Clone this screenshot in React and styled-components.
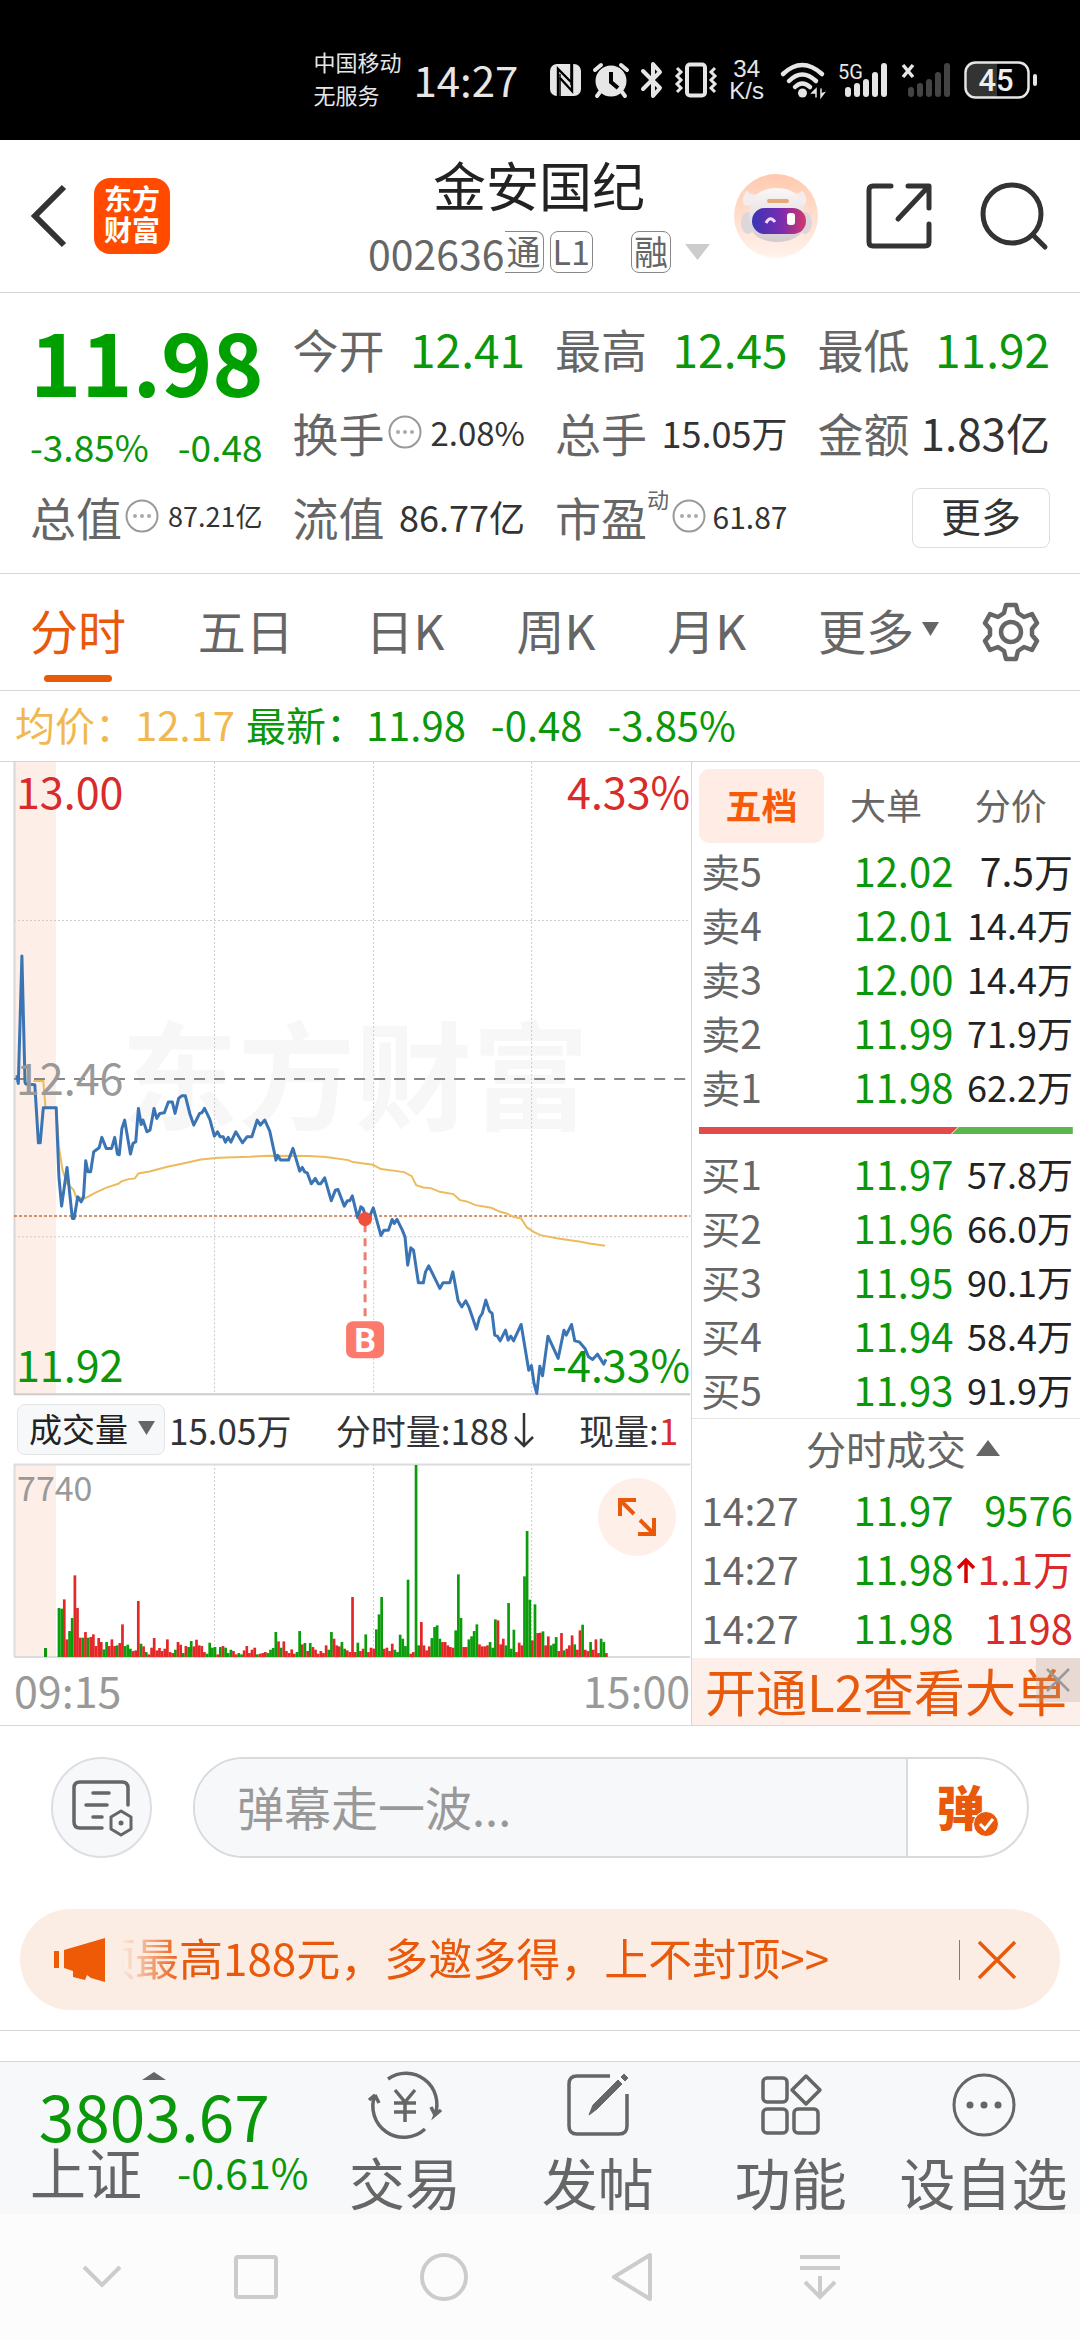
import styled, { createGlobalStyle } from 'styled-components'

const GlobalStyle = createGlobalStyle`
  * {
    box-sizing: border-box;
  }
  body {
    margin: 0;
    background: #fff;
    color: #333;
    font-family: "Noto Sans CJK SC", "Noto Sans", sans-serif;
  }
  button, input {
    margin: 0;
    padding: 0;
    border: 0;
    background: none;
    color: inherit;
    font: inherit;
  }
  a {
    color: inherit;
    text-decoration: none;
  }
  svg {
    display: block;
    flex: none;
    overflow: visible;
  }
`

const green = '#0a970a'
const red = '#d92b2b'
const orange = '#e8590c'
const grey = '#666'
const line = '#d6d6d6'

const Page = styled.div`
  min-height: 100vh;
  display: flex;
  flex-direction: column;
`

/* ---------- status bar ---------- */

const StatusBar = styled.div`
  height: 140px;
  padding: 20px 43px 0 0;
  background: #000;
  color: #e6e6e6;
  display: flex;
  align-items: center;
  justify-content: flex-end;
  gap: 12px;
`
const Carrier = styled.div`
  margin-bottom: 4px;
  font-size: 22px;
  line-height: 33px;
`
const Clock = styled.div`
  margin: 0 20px 2px 0;
  font-size: 42px;
  line-height: 48px;
`
const Speed = styled.div`
  margin-right: 4px;
  font-family: "Liberation Sans", sans-serif;
  font-size: 24px;
  line-height: 22px;
  text-align: center;
`

/* ---------- header ---------- */

const Header = styled.header`
  height: 153px;
  padding: 0 32px 0 30px;
  border-bottom: 1px solid ${line};
  display: grid;
  grid-template-columns: 1fr auto 1fr;
  align-items: center;
`
const HeaderSide = styled.div`
  display: flex;
  align-items: center;
  justify-content: ${(props) => (props.end ? 'flex-end' : 'flex-start')};
  gap: ${(props) => (props.end ? '48px' : '26px')};
`
const IconButton = styled.button`
  display: flex;
  align-items: center;
  justify-content: center;
`
const Logo = styled.a`
  width: 76px;
  height: 76px;
  border-radius: 16px;
  background: #ff4a00;
  color: #fff;
  font-size: 28px;
  font-weight: 700;
  line-height: 31px;
  text-align: center;
  padding-top: 5px;
`
const Title = styled.h1`
  margin: 0 0 8px;
  font-size: 53px;
  font-weight: 400;
  line-height: 64px;
  text-align: center;
  color: #222;
`
const SubTitle = styled.div`
  display: flex;
  align-items: center;
  font-size: 41px;
  line-height: 56px;
  color: ${grey};
`
const Tag = styled.span`
  height: 42px;
  padding: 0 2px;
  border: 1px solid #888;
  border-left-width: ${(props) => (props.open ? 0 : '1px')};
  border-radius: ${(props) => (props.open ? '0 8px 8px 0' : '8px')};
  font-size: 34px;
  line-height: 37px;
  margin-right: ${(props) => props.gap || 0}px;
`

/* ---------- quote ---------- */

const Quote = styled.section`
  padding: 15px 30px 13px;
  border-bottom: 1px solid ${line};
  display: grid;
  grid-template-columns: repeat(4, minmax(0, 1fr));
  grid-auto-rows: 84px;
  column-gap: 30px;
`
const PriceBlock = styled.div`
  grid-row: span 2;
  color: ${green};
`
const Price = styled.div`
  height: 112px;
  font-size: 87px;
  font-weight: 700;
  line-height: 102px;
  text-align: center;
  color: #00a000;
`
const Change = styled.div`
  display: flex;
  justify-content: space-between;
  font-size: 37px;
  line-height: 52px;
  white-space: nowrap;
`
const Metric = styled.div`
  display: flex;
  align-items: center;
  justify-content: space-between;
  padding-bottom: 5px;
  white-space: nowrap;
`
const MetricLabel = styled.span`
  display: flex;
  align-items: center;
  gap: 3px;
  font-size: 46px;
  line-height: 68px;
  color: ${grey};
`
const Sup = styled.sup`
  align-self: flex-start;
  margin-left: -3px;
  font-size: 22px;
  line-height: 32px;
`
const MetricValue = styled.span`
  font-size: ${(props) => props.size}px;
  line-height: 68px;
  color: ${(props) => props.color || '#333'};
`
const MoreButton = styled.button`
  justify-self: end;
  align-self: center;
  width: 138px;
  height: 60px;
  border: 1px solid #ddd;
  border-radius: 8px;
  font-size: 40px;
  line-height: 52px;
  padding-bottom: 6px;
`

/* ---------- tabs ---------- */

const Tabs = styled.nav`
  height: 117px;
  padding: 0 40px 0 30px;
  border-bottom: 1px solid ${line};
  display: flex;
  align-items: stretch;
  gap: 43px;
`
const TabList = styled.div`
  flex: 1;
  display: flex;
  justify-content: space-between;
`
const Tab = styled.button`
  position: relative;
  display: flex;
  align-items: center;
  gap: 8px;
  padding-bottom: 6px;
  font-size: 48px;
  white-space: nowrap;
  color: ${(props) => (props.active ? orange : grey)};
  &::after {
    content: "";
    display: ${(props) => (props.active ? 'block' : 'none')};
    position: absolute;
    left: 14px;
    right: 14px;
    bottom: 8px;
    height: 7px;
    border-radius: 4px;
    background: ${orange};
  }
`
const InfoLine = styled.div`
  height: 71px;
  padding: 0 15px 4px;
  border-bottom: 1px solid ${line};
  display: flex;
  align-items: center;
  gap: 25px;
  font-size: 40px;
  color: ${green};
`
const Average = styled.span`
  color: #f0b84e;
  margin-right: -14px;
`

/* ---------- chart + order book ---------- */

const Main = styled.main`
  display: grid;
  grid-template-columns: 64% 36%;
  border-bottom: 1px solid ${line};
`
const ChartColumn = styled.div`
  padding: 0 1px 0 14px;
  display: flex;
  flex-direction: column;
`
const Plot = styled.div`
  position: relative;
  svg {
    width: 100%;
    height: auto;
  }
`
const VolumeHead = styled.div`
  height: 69px;
  padding: 0 12px 0 3px;
  display: flex;
  align-items: center;
  justify-content: space-between;
  font-size: 35px;
  line-height: 48px;
  white-space: nowrap;
`
const VolumeGroup = styled.div`
  display: flex;
  align-items: center;
  gap: 4px;
`
const Picker = styled.button`
  height: 51px;
  padding: 0 9px 3px 11px;
  border: 1px solid #e2e4e6;
  border-radius: 8px;
  background: #f7f8fa;
  display: flex;
  align-items: center;
  gap: 10px;
  font-size: 33px;
  color: #222;
`
const Now = styled.span`
  color: ${red};
`
const Expand = styled.button`
  position: absolute;
  top: 14px;
  right: 14px;
  width: 78px;
  height: 78px;
  border-radius: 50%;
  background: #fef0e8;
  display: flex;
  align-items: center;
  justify-content: center;
  svg {
    width: 40px;
    height: 40px;
  }
`
const TimeAxis = styled.div`
  flex: 1;
  display: flex;
  align-items: center;
  justify-content: space-between;
  padding-bottom: 6px;
  font-size: 43px;
  line-height: 50px;
  color: #999;
`
const Panel = styled.div`
  border-left: 1px solid ${line};
  display: flex;
  flex-direction: column;
`
const PanelTabs = styled.div`
  padding: 7px 7px 2px;
  display: grid;
  grid-template-columns: repeat(3, 1fr);
`
const PanelTab = styled.button`
  height: 74px;
  padding-bottom: 4px;
  border-radius: 10px;
  background: ${(props) => (props.active ? '#feece5' : 'none')};
  color: ${(props) => (props.active ? '#f75b0a' : grey)};
  font-size: 36px;
  font-weight: ${(props) => (props.active ? 700 : 400)};
`
const Levels = styled.table`
  width: calc(100% - 14px);
  margin: 0 7px;
  border-collapse: collapse;
  table-layout: fixed;
`
const Row = styled.tr`
  height: ${(props) => props.h}px;
`
const Name = styled.th`
  width: 36%;
  padding: 0 0 4px 2px;
  text-align: left;
  font-weight: 400;
  font-size: 39px;
  line-height: 44px;
  color: ${grey};
`
const Cell = styled.td`
  padding: 0 0 4px;
  text-align: right;
  white-space: nowrap;
  font-size: ${(props) => props.size || 40}px;
  line-height: 44px;
  color: ${(props) => props.color || green};
`
const Up = styled.svg`
  display: inline-block;
  margin-right: 2px;
`
const RatioBar = styled.svg`
  width: calc(100% - 14px);
  height: 7px;
  margin: 12px 7px 14px;
`
const DealsHead = styled.button`
  height: 63px;
  border-top: 1px solid #e4e4e4;
  padding: 0 0 4px 34px;
  display: flex;
  align-items: center;
  justify-content: center;
  gap: 10px;
  font-size: 40px;
  line-height: 50px;
  color: ${grey};
`
const Banner = styled.div`
  position: relative;
  flex: 1;
  min-height: 67px;
  background: #fdf0ea;
  display: flex;
  align-items: center;
  justify-content: center;
  padding-bottom: 4px;
  font-size: 51px;
  line-height: 56px;
  color: ${orange};
  white-space: nowrap;
`
const BannerClose = styled.button`
  position: absolute;
  top: 0;
  right: 0;
  width: 44px;
  height: 44px;
  background: rgba(180, 160, 150, 0.28);
  display: flex;
  align-items: center;
  justify-content: center;
`

/* ---------- comment bar, promo ---------- */

const CommentBar = styled.form`
  padding: 31px 51px 0;
  display: flex;
  gap: 41px;
`
const RoundButton = styled.button`
  width: 101px;
  height: 101px;
  border: 2px solid #dcdee4;
  border-radius: 50%;
  background: #f7f8fa;
  display: flex;
  align-items: center;
  justify-content: center;
`
const CommentBox = styled.div`
  flex: 1;
  display: flex;
  height: 101px;
  border: 2px solid #d8dadf;
  border-radius: 51px;
  overflow: hidden;
`
const CommentInput = styled.input`
  flex: 1;
  min-width: 0;
  padding: 0 42px 4px;
  background: #f7f8fa;
  font-size: 47px;
  outline: none;
  &::placeholder {
    color: #999;
    opacity: 1;
  }
`
const Danmu = styled.button`
  position: relative;
  width: 121px;
  border-left: 2px solid #d8dadf;
  padding: 0 14px 6px 0;
  font-size: 48px;
  font-weight: 900;
  color: ${orange};
  svg {
    position: absolute;
    left: 65px;
    top: 52px;
  }
`
const Promo = styled.div`
  height: 101px;
  margin: 51px 20px 20px;
  padding: 0 44px 0 33px;
  border-radius: 51px;
  background: #fcede4;
  color: ${orange};
  display: flex;
  align-items: center;
`
const PromoText = styled.a`
  flex: 1;
  display: flex;
  justify-content: flex-start;
  margin-left: 14px;
  padding-bottom: 5px;
  overflow: hidden;
  white-space: nowrap;
  font-size: 44px;
  line-height: 64px;
  mask-image: linear-gradient(90deg, transparent 0, #000 60px);
`
const Scrolled = styled.span`
  width: 14px;
  display: flex;
  justify-content: flex-end;
  overflow: hidden;
`
const PromoClose = styled.button`
  height: 40px;
  padding-left: 18px;
  border-left: 1px solid ${orange};
  display: flex;
  align-items: center;
`

/* ---------- bottom bars ---------- */

const Spacer = styled.div`
  height: 31px;
  border-top: 1px solid ${line};
`
const BottomBar = styled.nav`
  height: 153px;
  border-top: 1px solid ${line};
  background: #f7f8fa;
  display: grid;
  grid-template-columns: 16fr repeat(4, 10fr);
`
const Index = styled.a`
  display: flex;
  flex-direction: column;
  align-items: center;
  padding-top: 10px;
  color: ${green};
`
const IndexValue = styled.div`
  margin-top: 4px;
  font-size: 64px;
  line-height: 60px;
`
const IndexRow = styled.div`
  align-self: stretch;
  padding-left: 30px;
  display: flex;
  justify-content: space-between;
  align-items: center;
  font-size: 41px;
  line-height: 54px;
`
const IndexName = styled.span`
  font-size: 56px;
  color: ${grey};
`
const Action = styled.button`
  display: flex;
  flex-direction: column;
  align-items: center;
  padding-top: 10px;
  font-size: 56px;
  line-height: 76px;
  color: ${grey};
  white-space: nowrap;
  svg {
    margin-bottom: 5px;
  }
`
const SystemNav = styled.nav`
  flex: 1;
  min-height: 126px;
  background: #fcfcfc;
  display: grid;
  grid-template-columns: 162fr repeat(4, 188fr) 166fr;
`
const NavKey = styled.button`
  display: flex;
  align-items: center;
  justify-content: center;
  padding-left: ${(props) => (props.first ? '42px' : 0)};
`

/* ---------- data ---------- */

const priceData = [
  [35, -10], [38, -10], [41, 10], [49, -372], [56, 6], [58, 12], [78, 14], [86, 188], [90, 188], [97, 83],
  [126, 83], [132, 290], [138, 378], [150, 262], [162, 415], [166, 415], [174, 350], [182, 365],
  [187, 350], [192, 242], [197, 275], [203, 275], [210, 215], [222, 203], [228, 172], [238, 205],
  [250, 205], [257, 172], [263, 222], [267, 224], [273, 145], [279, 120], [292, 222], [298, 190],
  [304, 185], [310, 85], [316, 133], [320, 120], [329, 155], [336, 150], [345, 85], [351, 115],
  [358, 100], [368, 98], [377, 66], [386, 66], [392, 100], [400, 55], [407, 47], [415, 47], [425, 100],
  [434, 135], [447, 100], [452, 98], [458, 85], [470, 118], [480, 168], [487, 155], [493, 170],
  [500, 170], [505, 186], [511, 172], [517, 186], [528, 155], [543, 188], [553, 170], [564, 170],
  [576, 120], [583, 135], [593, 120], [604, 152], [618, 240], [622, 226], [628, 240], [646, 240],
  [656, 205], [671, 273], [677, 262], [682, 275], [688, 278], [697, 311], [706, 295], [713, 311],
  [718, 311], [727, 293], [742, 362], [751, 330], [757, 328], [771, 378], [778, 362], [783, 362],
  [789, 347], [801, 413], [808, 380], [813, 385], [820, 413], [826, 415], [836, 383], [846, 432],
  [853, 466], [860, 450], [870, 450], [878, 418], [883, 430], [889, 418], [901, 450], [907, 470],
  [913, 555], [920, 503], [926, 510], [937, 608], [948, 608], [953, 575], [960, 557], [985, 625],
  [992, 608], [1007, 608], [1014, 575], [1026, 662], [1034, 680], [1043, 662], [1050, 680],
  [1067, 747], [1074, 712], [1080, 700], [1088, 660], [1096, 693], [1102, 700], [1108, 765],
  [1114, 768], [1120, 782], [1132, 750], [1138, 780], [1144, 768], [1150, 782], [1167, 733],
  [1184, 870], [1190, 856], [1196, 910], [1202, 940], [1209, 858], [1215, 887], [1227, 768],
  [1250, 835], [1263, 750], [1268, 765], [1280, 733], [1287, 782], [1297, 785], [1310, 805],
  [1318, 830], [1327, 838], [1338, 822], [1352, 852], [1357, 838],
]

const averageData = [
  [75, 3], [97, 3], [102, 83], [126, 83], [132, 200], [140, 270], [150, 310], [165, 330], [170, 350],
  [190, 355], [215, 337], [240, 322], [265, 311], [272, 304], [288, 297], [302, 295], [310, 280],
  [335, 274], [375, 260], [410, 250], [450, 238], [490, 233], [560, 230], [600, 227], [690, 228],
  [730, 231], [780, 240], [790, 246], [835, 254], [853, 267], [905, 276], [922, 288], [932, 315],
  [948, 322], [965, 324], [985, 335], [1015, 342], [1030, 360], [1045, 364], [1065, 375], [1100, 383],
  [1120, 395], [1135, 400], [1150, 410], [1167, 415], [1180, 442], [1195, 455], [1210, 465],
  [1250, 475], [1300, 485], [1320, 490], [1355, 497],
]

// one bar a minute from 09:30, negative when the price went down
const volumeData = [
  -147, -145, 173, 53, -78, -117, 245, 147, 58, -58, 75, -58, 60, 68, 33, 57, 45, -23, -45, 33, 53, 33,
  -35, 42, 98, -33, -37, -25, 18, 20, 168, -40, 32, -15, 8, 28, 57, 20, 27, 18, 25, 53, 15, 12, -22, 45,
  37, -12, 33, -30, -48, 32, 52, 35, 33, 15, -10, -43, -28, -30, 8, -30, 33, -28, -12, -22, 18, 8, -12,
  -8, 20, 33, 12, 22, 28, -8, 10, 12, 15, -12, -22, -27, -75, 47, -28, 47, 18, 12, 23, 10, -15, -78, 38,
  -42, 18, -42, 30, 22, 10, 18, 12, 35, -22, -75, 55, 35, 32, -45, -25, 20, 15, 180, 15, -43, 18, 25,
  -68, 15, 28, 25, -83, -128, -180, 25, 28, 18, 40, -22, -15, -67, -55, -33, -232, 10, 15, -576, -35,
  105, 35, 20, 32, -57, -90, -95, -55, 45, 45, 35, 30, 28, -80, -248, -117, 30, 30, -53, -62, -78, -98,
  38, 32, 32, 35, -45, -28, -113, 110, 38, 55, -35, -162, -25, -82, 15, 43, 35, -242, -378, -172, 50,
  -158, 72, 73, -77, 35, 62, -35, -40, -60, 18, 72, -20, 25, 35, 65, -38, 22, 80, -97, 22, 18, -45, 22,
  53, 12, -55, -45, 12,
]

const scaleX = (v) => v / 2.24 - 14
const scaleY = (v) => v / 3 + 318
const toPoints = (data) =>
  data.map(([x, y]) => `${scaleX(x).toFixed(1)},${scaleY(y).toFixed(1)}`).join(' ')

const sells = [
  ['卖5', '12.02', '7.5万'],
  ['卖4', '12.01', '14.4万'],
  ['卖3', '12.00', '14.4万'],
  ['卖2', '11.99', '71.9万'],
  ['卖1', '11.98', '62.2万'],
]
const buys = [
  ['买1', '11.97', '57.8万'],
  ['买2', '11.96', '66.0万'],
  ['买3', '11.95', '90.1万'],
  ['买4', '11.94', '58.4万'],
  ['买5', '11.93', '91.9万'],
]
const deals = [
  { time: '14:27', price: '11.97', volume: '9576', color: green },
  { time: '14:27', price: '11.98', volume: '1.1万', color: red, up: true },
  { time: '14:27', price: '11.98', volume: '1198', color: red },
]

/* ---------- small drawings ---------- */

const Dots = () => (
  <svg width="34" height="34" viewBox="0 0 34 34" fill="#aaa">
    <circle cx="17" cy="17" r="15.5" fill="none" stroke="#999" strokeWidth="2" />
    <circle cx="10" cy="17" r="2" />
    <circle cx="17" cy="17" r="2" />
    <circle cx="24" cy="17" r="2" />
  </svg>
)

const Triangle = ({ w, h, color = grey, up }) => (
  <svg width={w} height={h} viewBox="0 0 10 10" preserveAspectRatio="none">
    <path d={up ? 'M0 10H10L5 0z' : 'M0 0H10L5 10z'} fill={color} />
  </svg>
)

const Signal = ({ label, color }) => (
  <svg width="51" height="36" viewBox="0 0 51 36">
    {[0, 1, 2, 3, 4].map((i) => {
      const h = [10, 14, 18, 25, 34][i]
      return <rect key={i} x={7 + i * 9} y={35 - h} width="6" height={h} rx="3" fill={color} />
    })}
    {label ? (
      <text x="0" y="17" fontSize="20" fontFamily="Roboto, sans-serif" fill="#e6e6e6">{label}</text>
    ) : (
      <path d="M2 3l10 12M12 3L2 15" stroke="#e6e6e6" strokeWidth="3.5" />
    )}
  </svg>
)

const StatusIcons = () => (
  <>
    <svg width="31" height="34" viewBox="0 0 31 34">
      <rect y="1" width="31" height="32" rx="7" fill="#e6e6e6" />
      <path d="M8 33V6l13 13M22 1v27L10 15" fill="none" stroke="#000" strokeWidth="2.4" />
      <path d="M10 11v22M21 1v21" fill="none" stroke="#000" strokeWidth="1.5" />
    </svg>
    <svg width="36" height="36" viewBox="0 0 36 36">
      <circle cx="18" cy="19" r="15.5" fill="#e6e6e6" />
      <path d="M7 30l-3 4M29 30l3 4M2 8l6-5M34 8l-6-5" stroke="#e6e6e6" strokeWidth="4" strokeLinecap="round" />
      <path d="M18 10v10l7 6" fill="none" stroke="#000" strokeWidth="4" />
    </svg>
    <svg width="22" height="36" viewBox="0 0 22 36">
      <path d="M2 9l17 17-7 8V2l7 8L2 27" fill="none" stroke="#e6e6e6" strokeWidth="4" strokeLinejoin="round" strokeLinecap="round" />
    </svg>
    <svg width="42" height="36" viewBox="0 0 42 36" fill="none" stroke="#e6e6e6">
      <rect x="12" y="2.500" width="18" height="31" rx="3" strokeWidth="4" />
      <path d="M2 6l4 4-4 4 4 4-4 4 4 4-4 4M40 6l-4 4 4 4-4 4 4 4-4 4 4 4" strokeWidth="3" />
    </svg>
  </>
)

const Wifi = () => (
  <svg width="46" height="36" viewBox="0 0 46 36" fill="none" stroke="#e6e6e6" strokeWidth="4.500" strokeLinecap="round">
    <path d="M3 12Q22 -6 42 12M9 19Q22 6 36 19M15 25Q22 18 30 25" />
    <circle cx="22.500" cy="31" r="4.500" fill="#e6e6e6" stroke="none" />
    <path d="M32 31h4v-4zM36 27v8M41 35v-8M41 32l3-1-3 4z" fill="#e6e6e6" strokeWidth="1.5" />
  </svg>
)

const Battery = () => (
  <svg width="73" height="38" viewBox="0 0 73 38">
    <path d="M12 2H33V36H12Q3 36 3 27V11Q3 2 12 2z" fill="#333" />
    <rect x="1.500" y="1.500" width="63" height="35" rx="10" fill="none" stroke="#e6e6e6" strokeWidth="2.500" />
    <rect x="69" y="13" width="4" height="12" rx="2" fill="#e6e6e6" />
    <text x="32" y="30" textAnchor="middle" fontSize="31" fontFamily="Roboto, sans-serif" fontWeight="500" fill="#eee">45</text>
  </svg>
)

const Robot = () => (
  <svg width="84" height="84" viewBox="0 0 84 84">
    <defs>
      <linearGradient id="halo" x2="0" y2="1">
        <stop offset="0" stopColor="#ffc9ae" />
        <stop offset="1" stopColor="#fff3ec" />
      </linearGradient>
      <linearGradient id="visor">
        <stop offset="0" stopColor="#3a35b5" />
        <stop offset=".55" stopColor="#7a2cae" />
        <stop offset="1" stopColor="#d6386a" />
      </linearGradient>
      <linearGradient id="shell" x2="0" y2="1">
        <stop offset="0" stopColor="#fbf8f8" />
        <stop offset="1" stopColor="#d2cbd0" />
      </linearGradient>
    </defs>
    <circle cx="42" cy="42" r="42" fill="url(#halo)" />
    <path d="M13 16Q5 27 12 32L24 30 27 20Q15 22 13 16zM68 16Q76 27 69 32L58 28 54 18Q66 22 68 16z" fill="#f3edee" />
    <ellipse cx="14" cy="49" rx="7" ry="11" fill="#ddd6da" />
    <ellipse cx="71" cy="49" rx="7" ry="11" fill="#ddd6da" />
    <path d="M15 45Q14 14 43 14Q70 14 71 44Q72 67 43 68Q15 67 15 45z" fill="url(#shell)" />
    <rect x="33" y="25" width="22" height="4" rx="2" fill="#e7a874" />
    <rect x="18" y="34" width="54" height="26" rx="13" fill="url(#visor)" />
    <path d="M32 49Q36 41 41 48" fill="none" stroke="#f0d8ff" strokeWidth="3" />
    <rect x="53" y="39" width="8" height="12" rx="3" fill="#fff" />
  </svg>
)

const PriceChart = () => (
  <svg viewBox="0 0 676 633" role="img" aria-label="分时走势">
    <rect width="42" height="632" fill="#fdeee7" />
    <text x="341" y="359" textAnchor="middle" fontSize="117" fontWeight="700" fill="#f7f7f7">东方财富</text>
    <g stroke="#ccc" strokeDasharray="2 2">
      <path d="M200.500 0V632M359.500 0V632M517.500 0V632M0 158.500H676M0 474.500H676" />
    </g>
    <path d="M.5 0V632" stroke="#d8d8d8" strokeWidth="2" />
    <path d="M0 632H676" stroke="#ccc" strokeWidth="2" />
    <path d="M0 317H676" stroke="#888" strokeWidth="2" strokeDasharray="11 9" />
    <path d="M0 454H676" stroke="#c9703f" strokeWidth="1.5" strokeDasharray="3 2" />
    <polyline points={toPoints(averageData)} fill="none" stroke="#edbb5c" strokeWidth="2" />
    <polyline points={toPoints(priceData)} fill="none" stroke="#3a74b4" strokeWidth="3" strokeLinejoin="round" />
    <g fontSize="43">
      <text x="2" y="47" fill={red}>13.00</text>
      <text x="676" y="47" textAnchor="end" fill={red}>4.33%</text>
      <text x="2" y="333" fill="#999">12.46</text>
      <text x="2" y="620" fill={green}>11.92</text>
      <text x="676" y="620" textAnchor="end" fill={green}>-4.33%</text>
    </g>
    <path d="M351 462V560" stroke="#e88074" strokeWidth="3" strokeDasharray="8 6" />
    <circle cx="351" cy="457" r="7" fill="#f04f3e" />
    <rect x="332" y="559" width="38" height="37" rx="7" fill="#fb7a6b" />
    <text x="351" y="590" textAnchor="middle" fontSize="34" fontWeight="700" fontFamily="Roboto, sans-serif" fill="#fff">B</text>
  </svg>
)

const VolumeChart = () => (
  <svg viewBox="0 0 676 194" role="img" aria-label="成交量">
    <rect width="42" height="193" fill="#fdeee7" />
    <path d="M200.500 0V193M359.500 0V193M517.500 0V193" stroke="#ccc" strokeDasharray="2 2" />
    <path d="M0 .5H676M0 193H676M.5 0V193" stroke="#dcdcdc" strokeWidth="2" />
    <rect x="30" y="184" width="3" height="9" fill="#0a970a" />
    {volumeData.map((v, i) => (
      <rect
        key={i}
        x={(scaleX(132) + i * 2.644 - 1.3).toFixed(1)}
        y={193 - Math.abs(v) / 3}
        width="2.700"
        height={Math.abs(v) / 3}
        fill={v < 0 ? '#0a9c0a' : '#e32626'}
      />
    ))}
    <text x="3" y="37" fontSize="34" fill="#999">7740</text>
  </svg>
)

const LevelTable = ({ rows, label }) => (
  <Levels aria-label={label}>
    <tbody>
      {rows.map(([name, price, volume]) => (
        <Row key={name} h={54}>
          <Name scope="row">{name}</Name>
          <Cell>{price}</Cell>
          <Cell size={volume.length > 4 ? 36 : 39} color="#222">{volume}</Cell>
        </Row>
      ))}
    </tbody>
  </Levels>
)

const App = () => {
  return (
    <Page>
      <GlobalStyle />
      <StatusBar>
        <Carrier>中国移动<br />无服务</Carrier>
        <Clock>14:27</Clock>
        <StatusIcons />
        <Speed>34<br />K/s</Speed>
        <Wifi />
        <Signal label="5G" color="#e6e6e6" />
        <Signal color="#444" />
        <Battery />
      </StatusBar>

      <Header>
        <HeaderSide>
          <IconButton aria-label="返回">
            <svg width="38" height="64" viewBox="0 0 38 64">
              <path d="M34 3L5 32 34 61" fill="none" stroke="#333" strokeWidth="6" />
            </svg>
          </IconButton>
          <Logo href="#">东方<br />财富</Logo>
        </HeaderSide>
        <div>
          <Title>金安国纪</Title>
          <SubTitle>
            002636
            <Tag open gap={6}>通</Tag>
            <Tag gap={38}>L1</Tag>
            <Tag gap={14}>融</Tag>
            <Triangle w={25} h={16} color="#ccc" />
          </SubTitle>
        </div>
        <HeaderSide end>
          <IconButton aria-label="助手"><Robot /></IconButton>
          <IconButton aria-label="分享">
            <svg width="66" height="68" viewBox="0 0 66 68" fill="none" stroke="#333" strokeWidth="5" strokeLinecap="round" strokeLinejoin="round">
              <path d="M25 4H7Q3 4 3 8V60Q3 64 7 64H59Q63 64 63 60V42M42 4H63V26M62 5L32 37" />
            </svg>
          </IconButton>
          <IconButton aria-label="搜索">
            <svg width="68" height="68" viewBox="0 0 68 68" fill="none" stroke="#333" strokeWidth="5" strokeLinecap="round">
              <circle cx="32" cy="32" r="29" />
              <path d="M53 53L65 65" />
            </svg>
          </IconButton>
        </HeaderSide>
      </Header>

      <Quote>
        <PriceBlock>
          <Price>11.98</Price>
          <Change><span>-3.85%</span><span>-0.48</span></Change>
        </PriceBlock>
        <Metric>
          <MetricLabel>今开</MetricLabel>
          <MetricValue size={46} color={green}>12.41</MetricValue>
        </Metric>
        <Metric>
          <MetricLabel>最高</MetricLabel>
          <MetricValue size={46} color={green}>12.45</MetricValue>
        </Metric>
        <Metric>
          <MetricLabel>最低</MetricLabel>
          <MetricValue size={46} color={green}>11.92</MetricValue>
        </Metric>
        <Metric>
          <MetricLabel>换手<Dots /></MetricLabel>
          <MetricValue size={33}>2.08%</MetricValue>
        </Metric>
        <Metric>
          <MetricLabel>总手</MetricLabel>
          <MetricValue size={36}>15.05万</MetricValue>
        </Metric>
        <Metric>
          <MetricLabel>金额</MetricLabel>
          <MetricValue size={44}>1.83亿</MetricValue>
        </Metric>
        <Metric>
          <MetricLabel>总值<Dots /></MetricLabel>
          <MetricValue size={27}>87.21亿</MetricValue>
        </Metric>
        <Metric>
          <MetricLabel>流值</MetricLabel>
          <MetricValue size={36}>86.77亿</MetricValue>
        </Metric>
        <Metric>
          <MetricLabel>市盈<Sup>动</Sup><Dots /></MetricLabel>
          <MetricValue size={30}>61.87</MetricValue>
        </Metric>
        <MoreButton>更多</MoreButton>
      </Quote>

      <Tabs>
        <TabList>
          <Tab active>分时</Tab>
          <Tab>五日</Tab>
          <Tab>日K</Tab>
          <Tab>周K</Tab>
          <Tab>月K</Tab>
          <Tab>更多<Triangle w={17} h={14} /></Tab>
        </TabList>
        <IconButton aria-label="设置">
          <svg width="58" height="60" viewBox="0 0 58 60" fill="none" stroke="#666" strokeWidth="4.500" strokeLinejoin="round">
            <path d="M24 3H34L36 11 42 15 50 12 55 21 50 27V33L55 39 50 48 42 45 36 49 34 57H24L22 49 16 45 8 48 3 39 8 33V27L3 21 8 12 16 15 22 11z" />
            <circle cx="29" cy="30" r="10" />
          </svg>
        </IconButton>
      </Tabs>

      <InfoLine>
        <Average>均价：12.17</Average>
        <span>最新：11.98</span>
        <span>-0.48</span>
        <span>-3.85%</span>
      </InfoLine>

      <Main>
        <ChartColumn>
          <Plot><PriceChart /></Plot>
          <VolumeHead>
            <VolumeGroup>
              <Picker type="button">成交量<Triangle w={17} h={14} /></Picker>
              15.05万
            </VolumeGroup>
            <VolumeGroup>
              分时量:188
              <svg width="22" height="36" viewBox="0 0 22 36" fill="none" stroke="#333" strokeWidth="2.500">
                <path d="M11 1V34M2 25L11 34 20 25" />
              </svg>
            </VolumeGroup>
            <div>现量:<Now>1</Now></div>
          </VolumeHead>
          <Plot>
            <VolumeChart />
            <Expand aria-label="全屏">
              <svg viewBox="0 0 40 40" fill="none" stroke={orange} strokeWidth="4">
                <path d="M3 19V3H19M4 4L17 17M37 21V37H21M36 36L23 23" />
              </svg>
            </Expand>
          </Plot>
          <TimeAxis><span>09:15</span><span>15:00</span></TimeAxis>
        </ChartColumn>

        <Panel>
          <PanelTabs>
            <PanelTab active>五档</PanelTab>
            <PanelTab>大单</PanelTab>
            <PanelTab>分价</PanelTab>
          </PanelTabs>
          <LevelTable rows={sells} label="卖盘" />
          <RatioBar viewBox="0 0 374 7" preserveAspectRatio="none">
            <path d="M0 0H259L252 7H0z" fill="#e24b4b" />
            <path d="M260 0H374V7H253z" fill="#5cb64c" />
          </RatioBar>
          <LevelTable rows={buys} label="买盘" />
          <DealsHead>分时成交<Triangle w={24} h={16} up /></DealsHead>
          <Levels aria-label="分时成交">
            <tbody>
              {deals.map((deal, index) => (
                <Row key={index} h={59}>
                  <Name scope="row">{deal.time}</Name>
                  <Cell>{deal.price}</Cell>
                  <Cell color={deal.color}>
                    {deal.up && (
                      <Up width="18" height="28" viewBox="0 0 18 28" fill="none" stroke="#d90000" strokeWidth="3.500">
                        <path d="M9 26V3M1 11L9 3 17 11" />
                      </Up>
                    )}
                    {deal.volume}
                  </Cell>
                </Row>
              ))}
            </tbody>
          </Levels>
          <Banner>
            <a href="#">开通L2查看大单</a>
            <BannerClose aria-label="关闭">
              <svg width="24" height="24" viewBox="0 0 24 24" stroke="#999" strokeWidth="2.500">
                <path d="M1 1L23 23M23 1L1 23" />
              </svg>
            </BannerClose>
          </Banner>
        </Panel>
      </Main>

      <CommentBar>
        <RoundButton type="button" aria-label="弹幕设置">
          <svg width="62" height="58" viewBox="0 0 62 58" fill="none" stroke="#666" strokeWidth="3.500" strokeLinecap="round">
            <path d="M31 49H9Q3 49 3 43V9Q3 3 9 3H51Q57 3 57 9V26M22 14H38M15 26H36M22 38H31" />
            <path d="M50 32L60 38V50L50 56 40 50V38z" strokeWidth="3" strokeLinejoin="round" />
            <circle cx="50" cy="44" r="2.500" fill="#666" stroke="none" />
          </svg>
        </RoundButton>
        <CommentBox>
          <CommentInput aria-label="弹幕" placeholder="弹幕走一波..." />
          <Danmu type="button">
            弹
            <svg width="26" height="26" viewBox="0 0 26 26">
              <circle cx="13" cy="13" r="12.500" fill={orange} stroke="#fff" />
              <path d="M7 13l5 5 8-10" fill="none" stroke="#fff" strokeWidth="3" />
            </svg>
          </Danmu>
        </CommentBox>
      </CommentBar>

      <Promo>
        <svg width="54" height="46" viewBox="0 0 54 46" fill="#ee5a05">
          <path d="M1 14H6V31H1zM11 13L52 1V45L38 41 34 38 32 43 20 40V34L11 31z" />
        </svg>
        <PromoText href="#"><Scrolled>顶</Scrolled>最高188元，多邀多得，上不封顶&gt;&gt;</PromoText>
        <PromoClose aria-label="关闭">
          <svg width="38" height="38" viewBox="0 0 38 38" stroke={orange} strokeWidth="3.500">
            <path d="M1 1L37 37M37 1L1 37" />
          </svg>
        </PromoClose>
      </Promo>

      <Spacer />
      <BottomBar>
        <Index href="#">
          <Triangle w={24} h={8} up />
          <IndexValue>3803.67</IndexValue>
          <IndexRow><IndexName>上证</IndexName>-0.61%</IndexRow>
        </Index>
        <Action>
          <svg width="74" height="66" viewBox="0 0 74 66" fill="none" stroke="#666" strokeWidth="3.500">
            <path d="M20 7A31 31 0 0 1 67 43L73 38M67 43L63 35M57 57A31 31 0 0 1 7 23L1 28M7 23L11 31" />
            <path d="M27 18L37 30 47 18M37 30V50M26 31H48M26 40H48" />
          </svg>
          交易
        </Action>
        <Action>
          <svg width="62" height="66" viewBox="0 0 62 66" fill="none" stroke="#666" strokeWidth="3.500">
            <path d="M43 4H10Q2 4 2 12V54Q2 62 10 62H52Q60 62 60 54V22" />
            <path d="M22 43L26 33 51 8 55 12 30 37zM54 5L57 2 61 6 58 9z" fill="#666" strokeWidth="1" />
          </svg>
          发帖
        </Action>
        <Action>
          <svg width="62" height="66" viewBox="0 0 62 66" fill="none" stroke="#666" strokeWidth="3.500">
            <rect x="3" y="6" width="24" height="24" rx="4" />
            <rect x="3" y="37" width="24" height="24" rx="4" />
            <rect x="34" y="37" width="24" height="24" rx="4" />
            <path d="M46 4L60 18 46 32 32 18z" strokeLinejoin="round" />
          </svg>
          功能
        </Action>
        <Action>
          <svg width="66" height="66" viewBox="0 0 66 66" fill="#666">
            <circle cx="33" cy="33" r="30" fill="none" stroke="#666" strokeWidth="3" />
            <circle cx="19" cy="33" r="3.500" />
            <circle cx="33" cy="33" r="3.500" />
            <circle cx="47" cy="33" r="3.500" />
          </svg>
          设自选
        </Action>
      </BottomBar>

      <SystemNav>
        <NavKey first aria-label="收起">
          <svg width="38" height="24" viewBox="0 0 38 24" fill="none" stroke="#ccc" strokeWidth="4">
            <path d="M1 2L19 20 37 2" />
          </svg>
        </NavKey>
        <NavKey aria-label="最近任务">
          <svg width="44" height="44" viewBox="0 0 44 44" fill="none" stroke="#ccc" strokeWidth="4">
            <rect x="2" y="2" width="40" height="40" rx="2" />
          </svg>
        </NavKey>
        <NavKey aria-label="主页">
          <svg width="48" height="48" viewBox="0 0 48 48" fill="none" stroke="#ccc" strokeWidth="4">
            <circle cx="24" cy="24" r="22" />
          </svg>
        </NavKey>
        <NavKey aria-label="后退">
          <svg width="42" height="48" viewBox="0 0 42 48" fill="none" stroke="#ccc" strokeWidth="4" strokeLinejoin="round">
            <path d="M39 2V46L3 24z" />
          </svg>
        </NavKey>
        <NavKey aria-label="通知栏">
          <svg width="42" height="46" viewBox="0 0 42 46" fill="none" stroke="#ccc" strokeWidth="4">
            <path d="M1 3H41M1 14H41M21 22V43M6 28L21 43 36 28" />
          </svg>
        </NavKey>
      </SystemNav>
    </Page>
  )
}

export default App
